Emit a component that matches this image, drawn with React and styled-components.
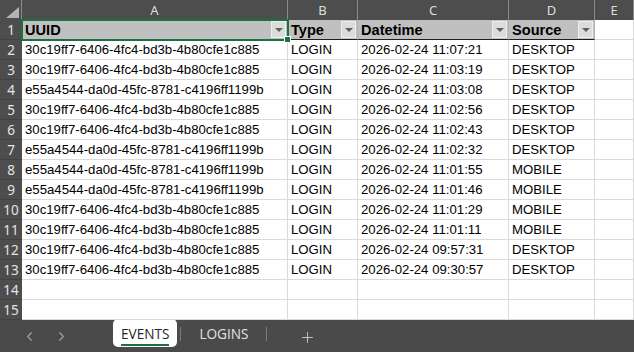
import React from 'react';
import styled, { createGlobalStyle } from 'styled-components';
import { ChevronLeft, ChevronRight, Plus } from 'lucide-react';

const GlobalStyle = createGlobalStyle`
  html, body {
    margin: 0;
    padding: 0;
    background: #ffffff;
  }
  body {
    font-family: 'Liberation Sans', Arial, sans-serif;
  }
`;

const COLUMNS = '22px 266px 70px 151px 86px 1fr';

const Window = styled.div`
  width: 634px;
  height: 352px;
  display: flex;
  flex-direction: column;
  overflow: hidden;
  background: #ffffff;
`;

const Sheet = styled.div`
  flex: 1;
  display: flex;
  flex-direction: column;
`;

const Row = styled.div`
  display: grid;
  grid-template-columns: ${COLUMNS};
  height: 20px;
  position: relative;
  z-index: ${(p) => (p.$top ? 2 : 1)};
`;

const Corner = styled.div`
  background: #4d4d4d;
  border-right: 1px solid #8a8a8a;
  display: flex;
  align-items: flex-end;
  justify-content: flex-end;
  padding: 0 2px 2px 0;
`;

const ColHeader = styled.div`
  background: #4d4d4d;
  color: #dedede;
  border-right: 1px solid #8a8a8a;
  font-family: 'Noto Sans', 'Open Sans', sans-serif;
  font-size: 13px;
  display: flex;
  align-items: center;
  justify-content: center;
  box-sizing: border-box;
`;

const RowHeader = styled.div`
  background: #4d4d4d;
  color: #e4e4e4;
  border-bottom: 1px solid #424242;
  font-family: 'Noto Sans', 'Open Sans', sans-serif;
  font-size: 13.5px;
  display: flex;
  align-items: center;
  justify-content: center;
  box-sizing: border-box;
`;

const Cell = styled.div`
  position: relative;
  box-sizing: border-box;
  border-right: 1px solid #dadada;
  border-bottom: 1px solid #dadada;
  color: #000;
  font-size: 13.2px;
  padding-left: 3px;
  display: flex;
  align-items: center;
  white-space: nowrap;
  overflow: hidden;
`;

const HeadCell = styled(Cell)`
  background: #c0c0c0;
  font-weight: bold;
  font-size: 14.6px;
  border-right: 1px solid #b4b4b4;
  border-bottom: 1px solid #1f1f1f;
  justify-content: space-between;
  padding-right: 1px;
  overflow: visible;
  ${(p) =>
    p.$selected &&
    `
    outline: 2px solid #1d7044;
    outline-offset: -1px;
    z-index: 1;
  `}
`;

const FilterButton = styled.span`
  width: 15px;
  height: 17px;
  box-sizing: border-box;
  background: #dcdcdc;
  border: 1px solid #efefef;
  display: flex;
  align-items: center;
  justify-content: center;

  &::after {
    content: '';
    border-left: 4px solid transparent;
    border-right: 4px solid transparent;
    border-top: 4px solid #606060;
  }
`;

const FillHandle = styled.span`
  position: absolute;
  right: -4px;
  bottom: -4px;
  width: 5px;
  height: 5px;
  background: #1d7044;
  border: 1px solid #ffffff;
`;

const TabBar = styled.div`
  height: 32px;
  flex: none;
  background: #4a4a4a;
  display: flex;
  align-items: flex-start;
  padding-left: 13px;
`;

const NavButton = styled.span`
  width: 32px;
  height: 32px;
  display: flex;
  align-items: center;
  justify-content: center;
  color: #a2a2a2;
`;

const Tabs = styled.div`
  display: flex;
  align-items: flex-start;
  margin-left: 36px;
  margin-top: -1px;
`;

const Tab = styled.div`
  height: 28px;
  box-sizing: border-box;
  padding: 0 8px;
  border-radius: 5px;
  display: flex;
  align-items: center;
  font-family: 'Open Sans', 'Noto Sans', sans-serif;
  font-size: 13.6px;
  color: ${(p) => (p.$active ? '#262626' : '#e2e2e2')};
  background: ${(p) => (p.$active ? '#ffffff' : 'transparent')};
  margin: 0 ${(p) => (p.$active ? '0' : '7px')};
`;

const TabLabel = styled.span`
  padding: 2px 0 1px;
  border-bottom: 2px solid ${(p) => (p.$active ? '#1d7044' : 'transparent')};
  margin-top: 2px;
`;

const Divider = styled.span`
  width: 1px;
  height: 14px;
  margin: 8px 3px 0;
  background: #7c7c7c;
`;

const AddSheet = styled.span`
  width: 32px;
  height: 32px;
  margin-left: 21px;
  margin-top: 1px;
  display: flex;
  align-items: center;
  justify-content: center;
  color: #d4d4d4;
`;

const A = '30c19ff7-6406-4fc4-bd3b-4b80cfe1c885';
const E = 'e55a4544-da0d-45fc-8781-c4196ff1199b';

const rows = [
  [A, '11:07:21', 'DESKTOP'],
  [A, '11:03:19', 'DESKTOP'],
  [E, '11:03:08', 'DESKTOP'],
  [A, '11:02:56', 'DESKTOP'],
  [A, '11:02:43', 'DESKTOP'],
  [E, '11:02:32', 'DESKTOP'],
  [E, '11:01:55', 'MOBILE'],
  [E, '11:01:46', 'MOBILE'],
  [A, '11:01:29', 'MOBILE'],
  [A, '11:01:11', 'MOBILE'],
  [A, '09:57:31', 'DESKTOP'],
  [A, '09:30:57', 'DESKTOP'],
];

const headers = ['UUID', 'Type', 'Datetime', 'Source'];

const App = () => {
  return (
    <Window>
      <GlobalStyle />
      <Sheet>
        <Row>
          <Corner>
            <svg width="13" height="11" viewBox="0 0 13 11">
              <polygon points="13,0 13,11 0,11" fill="#b4b4b4" />
            </svg>
          </Corner>
          {['A', 'B', 'C', 'D', 'E'].map((l) => (
            <ColHeader key={l}>{l}</ColHeader>
          ))}
        </Row>
        <Row $top>
          <RowHeader>1</RowHeader>
          {headers.map((h, i) => (
            <HeadCell key={h} $selected={i === 0}>
              {h}
              <FilterButton />
              {i === 0 && <FillHandle />}
            </HeadCell>
          ))}
          <Cell />
        </Row>
        {rows.map((r, i) => (
          <Row key={i}>
            <RowHeader>{i + 2}</RowHeader>
            <Cell>{r[0]}</Cell>
            <Cell>LOGIN</Cell>
            <Cell>2026-02-24 {r[1]}</Cell>
            <Cell>{r[2]}</Cell>
            <Cell />
          </Row>
        ))}
        {[14, 15].map((n) => (
          <Row key={n}>
            <RowHeader>{n}</RowHeader>
            <Cell />
            <Cell />
            <Cell />
            <Cell />
            <Cell />
          </Row>
        ))}
      </Sheet>
      <TabBar>
        <NavButton>
          <ChevronLeft size={15} strokeWidth={1.8} />
        </NavButton>
        <NavButton>
          <ChevronRight size={15} strokeWidth={1.8} />
        </NavButton>
        <Tabs>
          <Tab $active>
            <TabLabel $active>EVENTS</TabLabel>
          </Tab>
          <Divider />
          <Tab>
            <TabLabel>LOGINS</TabLabel>
          </Tab>
          <Divider />
        </Tabs>
        <AddSheet>
          <Plus size={17} strokeWidth={1.2} />
        </AddSheet>
      </TabBar>
    </Window>
  );
};

export default App;
